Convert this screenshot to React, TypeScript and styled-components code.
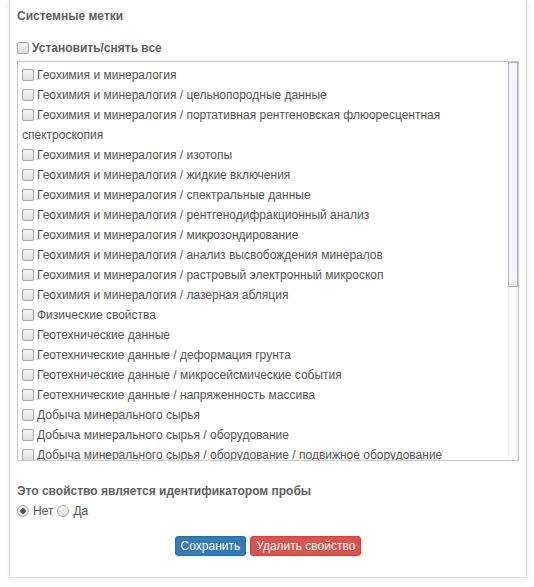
import React, { useEffect, useRef, useState } from 'react';
import styled, { createGlobalStyle } from 'styled-components';

const GlobalStyle = createGlobalStyle`
  body {
    margin: 0;
    background: #ffffff;
    font-family: "Liberation Sans", Arial, sans-serif;
    font-size: 12px;
    color: #555;
  }
`;

const Panel = styled.div`
  box-sizing: border-box;
  width: 518px;
  margin: -1px 0 0 9px;
  padding: 6px 7px 21px;
  border: 1px solid #dcdcdc;
  background: #fff;
  box-shadow: 0 2px 6px rgba(0, 0, 0, 0.08);
`;

const Title = styled.div`
  font-weight: bold;
  line-height: 20px;
  color: #5f5f5f;
`;

const ToggleAll = styled.label`
  display: flex;
  align-items: center;
  margin-top: 12px;
  line-height: 20px;
  font-weight: bold;
  color: #5f5f5f;
`;

const Check = styled.input.attrs({ type: 'checkbox' })`
  appearance: none;
  box-sizing: border-box;
  flex: none;
  width: 12px;
  height: 12px;
  margin: 0 3px 0 0;
  border: 1px solid #a8a8a8;
  border-radius: 2px;
  background: linear-gradient(#f4f4f4, #dedede);
  vertical-align: -2px;
`;

const ListFrame = styled.div`
  box-sizing: border-box;
  display: flex;
  height: 400px;
  margin-top: 3px;
  border: 1px solid #c8c8c8;
`;

const ListBox = styled.div`
  flex: 1;
  padding: 3px 0 2px 4px;
  overflow-y: scroll;
  scrollbar-width: none;

  &::-webkit-scrollbar {
    display: none;
  }
`;

const ScrollTrack = styled.div`
  position: relative;
  box-sizing: border-box;
  flex: none;
  width: 10px;
  border-left: 1px solid #ededed;
  border-right: 1px solid #ededed;
  background: #fcfcfc;
`;

const ScrollThumb = styled.div`
  position: absolute;
  box-sizing: border-box;
  left: -1px;
  right: -1px;
  border: 1px solid #b4b4b4;
  background: linear-gradient(90deg, #f6f6fa, #efeff6);
`;

const Item = styled.label`
  display: block;
  line-height: 20px;
  color: #555;
`;

const Section = styled.div`
  margin-top: 20px;
`;

const RadioRow = styled.div`
  display: flex;
  align-items: center;
  line-height: 20px;
`;

const Radio = styled.input.attrs({ type: 'radio' })`
  appearance: none;
  box-sizing: border-box;
  width: 12px;
  height: 12px;
  margin: 0 4px 0 0;
  border: 1px solid #a8a8a8;
  border-radius: 50%;
  background: linear-gradient(#f4f4f4, #dedede);

  &:checked {
    background: radial-gradient(circle, #555 0 2.5px, transparent 3px), linear-gradient(#f4f4f4, #dedede);
  }
`;

const RadioText = styled.span`
  margin-right: 4px;
`;

const Actions = styled.div`
  display: flex;
  justify-content: center;
  gap: 4px;
  margin-top: 15px;
`;

const Button = styled.button<{ $tone: 'primary' | 'danger' }>`
  padding: 0 5px;
  font-family: inherit;
  font-size: 12px;
  line-height: 18px;
  color: #fff;
  border-radius: 3px;
  border: 1px solid ${p => (p.$tone === 'primary' ? '#2e6da4' : '#d43f3a')};
  background: ${p => (p.$tone === 'primary' ? '#337ab7' : '#d9534f')};
  cursor: pointer;
`;

const tags = [
  'Геохимия и минералогия',
  'Геохимия и минералогия / цельнопородные данные',
  'Геохимия и минералогия / портативная рентгеновская флюоресцентная спектроскопия',
  'Геохимия и минералогия / изотопы',
  'Геохимия и минералогия / жидкие включения',
  'Геохимия и минералогия / спектральные данные',
  'Геохимия и минералогия / рентгенодифракционный анализ',
  'Геохимия и минералогия / микрозондирование',
  'Геохимия и минералогия / анализ высвобождения минералов',
  'Геохимия и минералогия / растровый электронный микроскоп',
  'Геохимия и минералогия / лазерная абляция',
  'Физические свойства',
  'Геотехнические данные',
  'Геотехнические данные / деформация грунта',
  'Геотехнические данные / микросейсмические события',
  'Геотехнические данные / напряженность массива',
  'Добыча минерального сырья',
  'Добыча минерального сырья / оборудование',
  'Добыча минерального сырья / оборудование / подвижное оборудование',
  'Добыча минерального сырья / оборудование / стационарное оборудование',
  'Добыча минерального сырья / буровзрывные работы',
  'Добыча минерального сырья / вентиляция',
  'Добыча минерального сырья / водоотлив',
  'Обогащение',
  'Обогащение / дробление и измельчение',
  'Обогащение / флотация',
  'Обогащение / выщелачивание',
  'Геология',
  'Геология / литология',
  'Геология / структурная геология',
  'Геология / изменения пород',
  'Геофизика',
  'Геофизика / скважинная геофизика',
  'Геофизика / магниторазведка',
];

const App: React.FC = () => {
  const [selected, setSelected] = useState<Set<number>>(new Set());
  const [isId, setIsId] = useState(false);
  const [thumb, setThumb] = useState({ top: 0, height: 0 });
  const listRef = useRef<HTMLDivElement>(null);

  const updateThumb = () => {
    const el = listRef.current;
    if (!el) return;
    const ratio = el.clientHeight / el.scrollHeight;
    setThumb({
      top: el.scrollTop * ratio,
      height: Math.max(20, el.clientHeight * ratio),
    });
  };

  useEffect(() => {
    updateThumb();
  }, []);

  const toggle = (i: number) => {
    const next = new Set(selected);
    if (next.has(i)) {
      next.delete(i);
    } else {
      next.add(i);
    }
    setSelected(next);
  };

  return (
    <>
      <GlobalStyle />
      <Panel>
        <Title>Системные метки</Title>
        <ToggleAll>
          <Check
            checked={selected.size === tags.length}
            onChange={e => setSelected(e.target.checked ? new Set(tags.map((_, i) => i)) : new Set())}
          />
          Установить/снять все
        </ToggleAll>
        <ListFrame>
          <ListBox ref={listRef} onScroll={updateThumb}>
            {tags.map((tag, i) => (
              <Item key={tag}>
                <Check checked={selected.has(i)} onChange={() => toggle(i)} />
                {tag}
              </Item>
            ))}
          </ListBox>
          <ScrollTrack>
            <ScrollThumb style={{ top: thumb.top, height: thumb.height }} />
          </ScrollTrack>
        </ListFrame>
        <Section>
          <Title>Это свойство является идентификатором пробы</Title>
          <RadioRow>
            <Radio name="isId" checked={!isId} onChange={() => setIsId(false)} />
            <RadioText>Нет</RadioText>
            <Radio name="isId" checked={isId} onChange={() => setIsId(true)} />
            <RadioText>Да</RadioText>
          </RadioRow>
        </Section>
        <Actions>
          <Button $tone="primary">Сохранить</Button>
          <Button $tone="danger">Удалить свойство</Button>
        </Actions>
      </Panel>
    </>
  );
};

export default App;
